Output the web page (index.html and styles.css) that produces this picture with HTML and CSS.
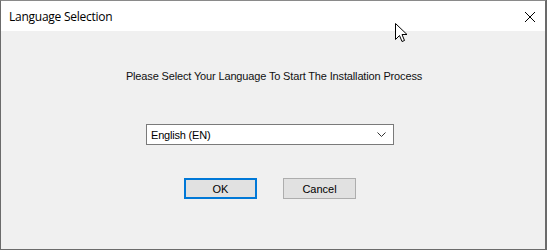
FILE: index.html
```html
<!DOCTYPE html>
<html>
<head>
<meta charset="utf-8">
<link rel="stylesheet" href="styles.css">
</head>
<body>
<div class="window">
  <div class="titlebar">
    <span class="title">Language Selection</span>
    <svg class="close" width="12" height="12" viewBox="0 0 12 12"><path d="M1 1 L11 11 M11 1 L1 11" stroke="#000" stroke-width="1" fill="none"/></svg>
  </div>
  <div class="content">
    <p class="prompt">Please Select Your Language To Start The Installation Process</p>
    <div class="select">
      <span class="select-text">English (EN)</span>
      <svg class="chevron" width="9" height="5" viewBox="0 0 9 5"><path d="M0.5 0.5 L4.5 4.5 L8.5 0.5" stroke="#333" stroke-width="1" fill="none"/></svg>
    </div>
    <div class="buttons">
      <div class="btn btn-default">OK</div>
      <div class="btn">Cancel</div>
    </div>
  </div>
  <svg class="cursor" width="13" height="20" viewBox="0 0 13 20"><path d="M0.5 0.5 L0.5 16.5 L4.5 12.5 L7 18.5 L9.5 17.5 L7 11.5 L12 11.5 Z" fill="#fff" stroke="#000" stroke-width="1" stroke-linejoin="miter"/></svg>
</div>
</body>
</html>
```
FILE: styles.css
```css
html, body {
  margin: 0;
  padding: 0;
  background: #6a6a6a;
}
.window {
  position: relative;
  width: 546px;
  height: 250px;
  box-sizing: border-box;
  border: 1px solid #6b6b6b;
  border-top-color: #8a8a8a;
  background: #f0f0f0;
  display: flex;
  flex-direction: column;
  font-family: "Liberation Sans", Arial, sans-serif;
  color: #000;
}
.titlebar {
  height: 30px;
  background: #fff;
  display: flex;
  align-items: center;
  justify-content: space-between;
  padding: 0 8px 0 8px;
}
.title {
  font-family: "Open Sans", "Noto Sans", sans-serif;
  font-size: 12px;
  letter-spacing: -0.25px;
  margin-top: 1px;
}
.close {
  margin-right: 1px;
  margin-top: 1px;
}
.content {
  display: flex;
  flex-direction: column;
  align-items: center;
}
.prompt {
  margin: 38px 0 0 2px;
  font-size: 11px;
  letter-spacing: -0.15px;
  line-height: 14px;
  height: 14px;
  color: #111;
}
.select {
  margin-top: 41px;
  margin-right: 6px;
  width: 248px;
  height: 21px;
  box-sizing: border-box;
  border: 1px solid #7a7a7a;
  background: #fff;
  display: flex;
  align-items: center;
  justify-content: space-between;
  padding: 0 7px 0 4px;
}
.select-text {
  font-size: 11px;
  letter-spacing: -0.2px;
}
.buttons {
  margin-top: 33px;
  margin-right: 6px;
  display: flex;
  gap: 26px;
}
.btn {
  width: 73px;
  height: 21px;
  box-sizing: border-box;
  border: 1px solid #adadad;
  background: #e1e1e1;
  display: flex;
  align-items: center;
  justify-content: center;
  font-size: 11px;
}
.btn-default {
  border: 2px solid #0078d7;
}
.cursor {
  position: absolute;
  left: 394px;
  top: 22px;
}
```
